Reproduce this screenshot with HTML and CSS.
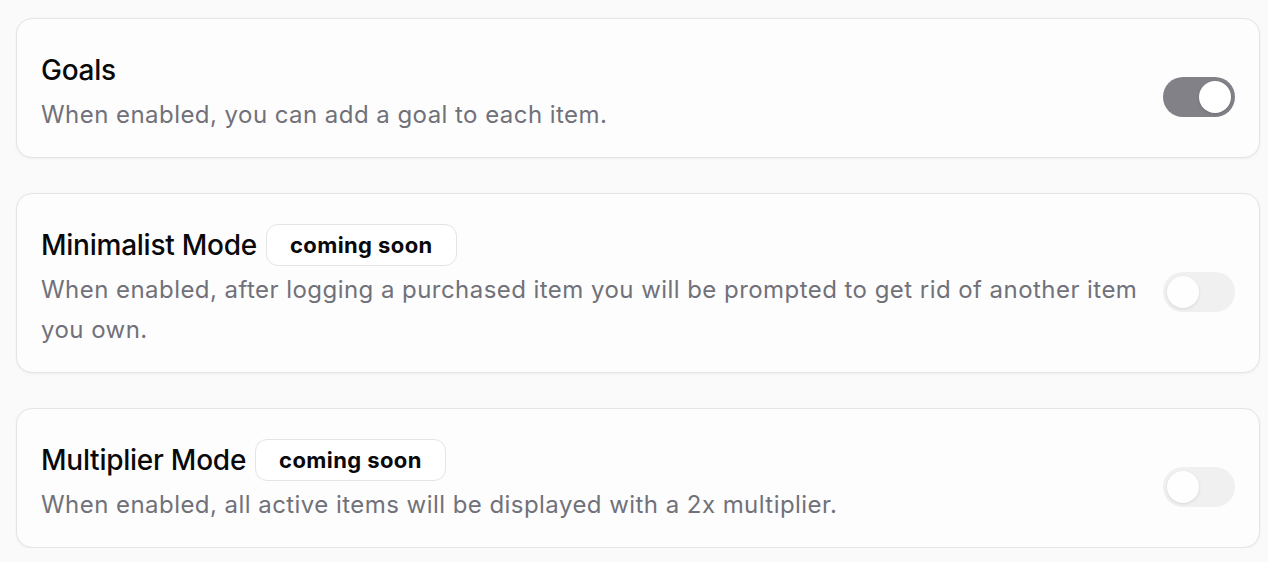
FILE: index.html
```html
<!DOCTYPE html>
<html lang="en">
<head>
<meta charset="utf-8">
<title>Settings</title>
<link rel="stylesheet" href="styles.css">
</head>
<body>
<main class="list">
  <section class="card">
    <div class="text">
      <div class="title-row"><h2 class="title">Goals</h2></div>
      <p class="desc">When enabled, you can add a goal to each item.</p>
    </div>
    <button class="switch on" role="switch" aria-checked="true"><span class="knob"></span></button>
  </section>
  <section class="card">
    <div class="text">
      <div class="title-row"><h2 class="title">Minimalist Mode</h2><span class="badge">coming soon</span></div>
      <p class="desc">When enabled, after logging a purchased item you will be prompted to get rid of another item you own.</p>
    </div>
    <button class="switch off" role="switch" aria-checked="false" disabled><span class="knob"></span></button>
  </section>
  <section class="card">
    <div class="text">
      <div class="title-row"><h2 class="title">Multiplier Mode</h2><span class="badge">coming soon</span></div>
      <p class="desc">When enabled, all active items will be displayed with a 2x multiplier.</p>
    </div>
    <button class="switch off" role="switch" aria-checked="false" disabled><span class="knob"></span></button>
  </section>
</main>
</body>
</html>
```
FILE: styles.css
```css
* { box-sizing: border-box; }
html, body { margin: 0; padding: 0; }
body {
  background: #fafafa;
  font-family: Inter, "Noto Sans", "Liberation Sans", sans-serif;
  color: #09090b;
}
.list {
  display: flex;
  flex-direction: column;
  gap: 35px;
  padding: 18px 8px 0 16px;
}
.card {
  display: flex;
  align-items: center;
  gap: 24px;
  background: #fdfdfd;
  border: 1px solid #e4e4e7;
  border-radius: 16px;
  padding: 30px 24px 22px 24px;
  box-shadow: 0 1px 3px rgba(0,0,0,0.05);
}
.text { flex: 1; min-width: 0; }
.title-row {
  display: flex;
  align-items: center;
  gap: 9px;
  height: 42px;
  margin-bottom: 4px;
}
.title {
  margin: 0;
  font-size: 28px;
  font-weight: 530;
  line-height: 42px;
  letter-spacing: -0.25px;
}
.badge {
  display: inline-flex;
  align-items: center;
  height: 42px;
  padding: 0 23px;
  border: 1.5px solid #e4e4e7;
  border-radius: 12px;
  background: #fff;
  font-size: 22px;
  font-weight: 700;
  letter-spacing: 0.4px;
  color: #09090b;
}
.desc {
  margin: 0;
  font-size: 24px;
  line-height: 40px;
  letter-spacing: 0.45px;
  color: #71717a;
}
.switch {
  flex: none;
  width: 72px;
  height: 40px;
  border: none;
  border-radius: 20px;
  padding: 4px;
  margin-top: 10px;
  display: flex;
  align-items: center;
  cursor: pointer;
}
.switch .knob {
  width: 32px;
  height: 32px;
  border-radius: 50%;
  background: #fff;
  box-shadow: 0 1px 3px rgba(0,0,0,0.12);
}
.switch.on { background: #818187; justify-content: flex-end; }
.switch.off { background: #efefef; justify-content: flex-start; opacity: 0.9; }
```
